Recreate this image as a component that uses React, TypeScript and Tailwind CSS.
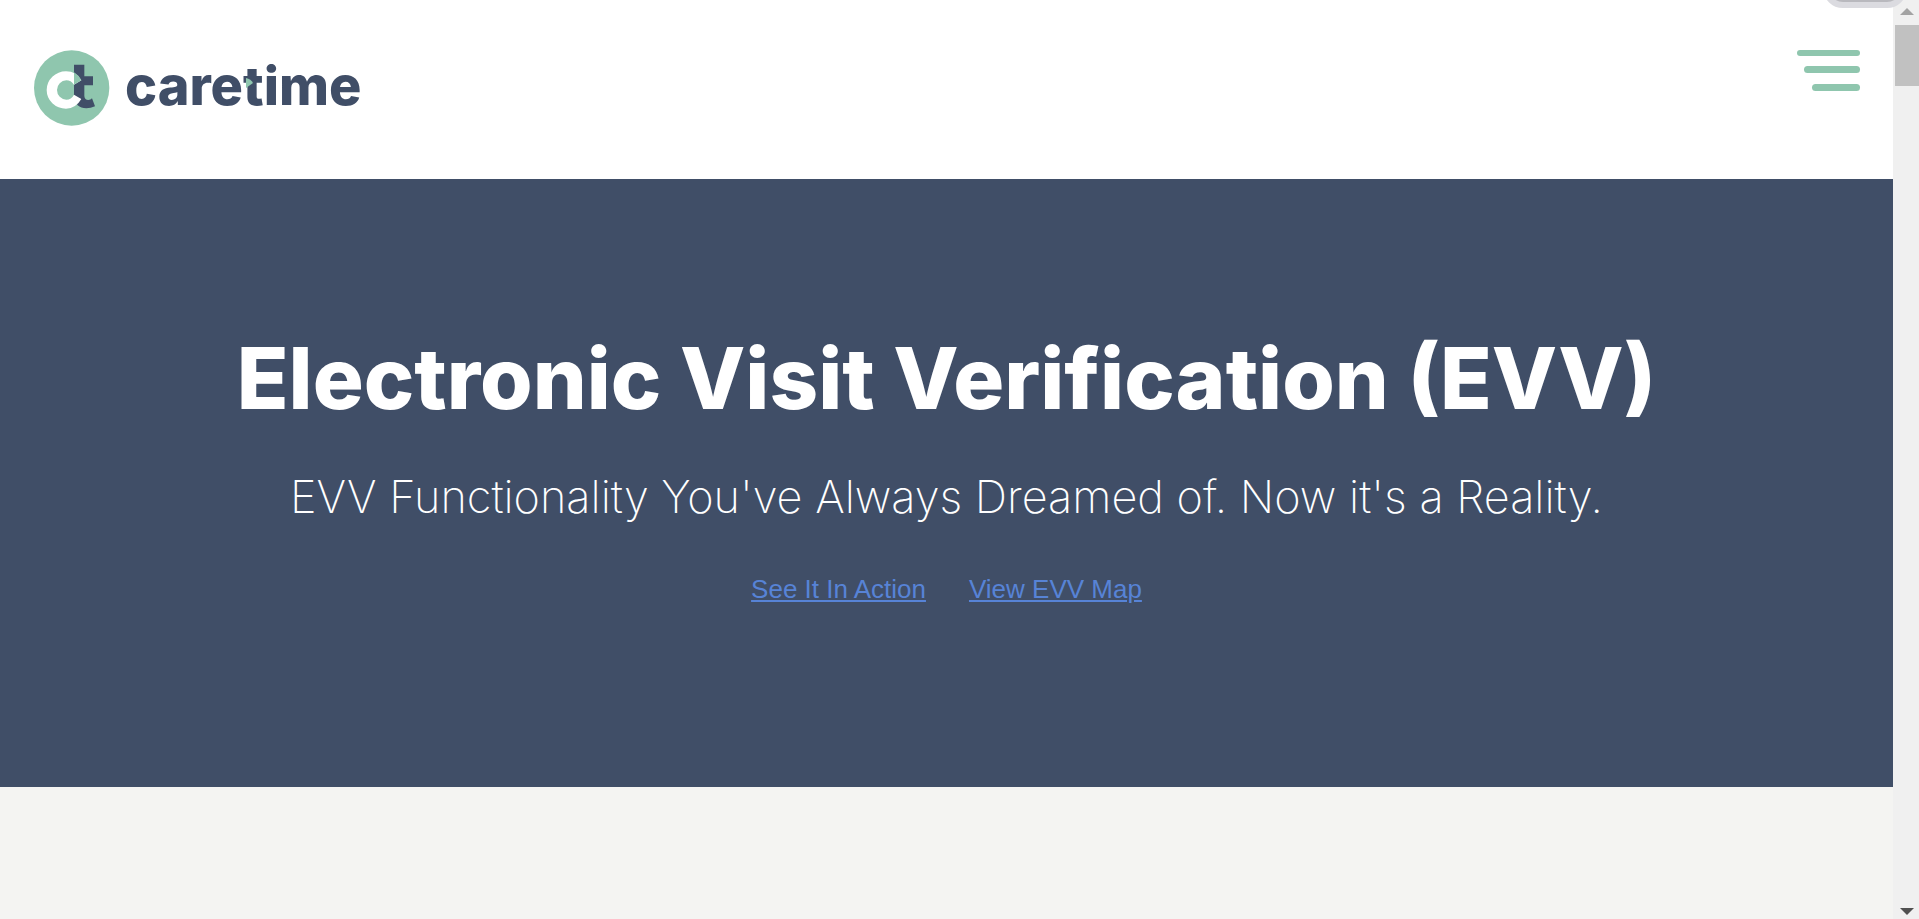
function LogoMark() {
  return (
    <svg viewBox="41 46 228 228" className="size-[76px] shrink-0" aria-hidden="true">
      <circle cx="154" cy="160" r="113" fill="#8fc6ae" />
      <path
        d="M161 90H192V125H218V152H192V184Q193 196 204 196Q211 196 215 191L224 215Q211 221 198 221Q182 221 172 212L161 190Z"
        fill="#404e67"
      />
      <path
        d="M183 137Q168 110 137 110A58 56 0 1 0 137 222Q167 221 183 193L161 180Q153 195 138 195A28 29 0 1 1 138 137Q152 137 161 150Z"
        fill="#fff"
      />
      <path d="M161 113Q176 122 183 137L161 150Z" fill="#8fc6ae" />
    </svg>
  );
}

function Logo() {
  return (
    <a href="#" className="flex items-center gap-[15px] text-[#404e67]">
      <LogoMark />
      <span className="pb-1 font-['Inter',sans-serif] text-[54px] leading-[64px] font-extrabold">
        care
        <span className="relative">
          t
          <svg viewBox="0 0 7 10" className="absolute top-[25px] left-[3px] h-[10px] w-[7px]" aria-hidden="true">
            <path d="M0 0Q5 1 7 5L0 10Z" fill="#8fc6ae" />
          </svg>
        </span>
        ime
      </span>
    </a>
  );
}

function MenuButton() {
  return (
    <button type="button" aria-label="Menu" className="flex flex-col items-end">
      <span className="h-[6px] w-[63px] rounded-full bg-[#8fc6ae]" />
      <span className="mt-[10px] h-[7px] w-14 rounded-full bg-[#8fc6ae]" />
      <span className="mt-[11px] h-[7px] w-12 rounded-full bg-[#8fc6ae]" />
    </button>
  );
}

function ScrollTrack() {
  return (
    <div className="flex w-[26px] shrink-0 flex-col items-center bg-[#f0f0f0] pt-2 pb-1 pl-0.5" aria-hidden="true">
      <svg viewBox="0 0 14 7" className="h-[7px] w-[14px]">
        <path d="M7 0L14 7H0Z" fill="#a3a3a3" />
      </svg>
      <div className="mt-[10px] h-[61px] w-full bg-[#c1c1c1]" />
      <svg viewBox="0 0 14 7" className="mt-auto h-[7px] w-[14px]">
        <path d="M0 0H14L7 7Z" fill="#505050" />
      </svg>
    </div>
  );
}

export default function App() {
  return (
    <div className="relative flex min-h-screen overflow-hidden">
      <div className="flex min-w-0 flex-1 flex-col bg-[#f4f4f2]">
        <header className="flex items-start justify-between bg-white pt-[50px] pr-[33px] pb-[53px] pl-[34px]">
          <Logo />
          <MenuButton />
        </header>
        <main>
          <section className="bg-[#404e67] px-8 pt-[152px] pb-[182px] text-center">
            <h1 className="font-['Inter',sans-serif] text-[85px] leading-[96px] font-extrabold text-white">
              Electronic Visit Verification (EVV)
            </h1>
            <p className="mt-[42px] font-['Inter',sans-serif] text-[45px] leading-[56px] font-extralight text-white">
              EVV Functionality You've Always Dreamed of. Now it's a Reality.
            </p>
            <nav className="mt-[48px] flex justify-center gap-[43px] font-['Liberation_Sans',sans-serif] text-[26px] leading-8 text-[#5783d6]">
              <a href="#" className="underline">See It In Action</a>
              <a href="#" className="underline">View EVV Map</a>
            </nav>
          </section>
        </main>
      </div>
      <ScrollTrack />
      <div className="absolute -top-[32px] right-[12px] h-10 w-[84px] rounded-[20px] border-6 border-[#dbdbe0] bg-[#b9b9be]" aria-hidden="true" />
    </div>
  );
}
